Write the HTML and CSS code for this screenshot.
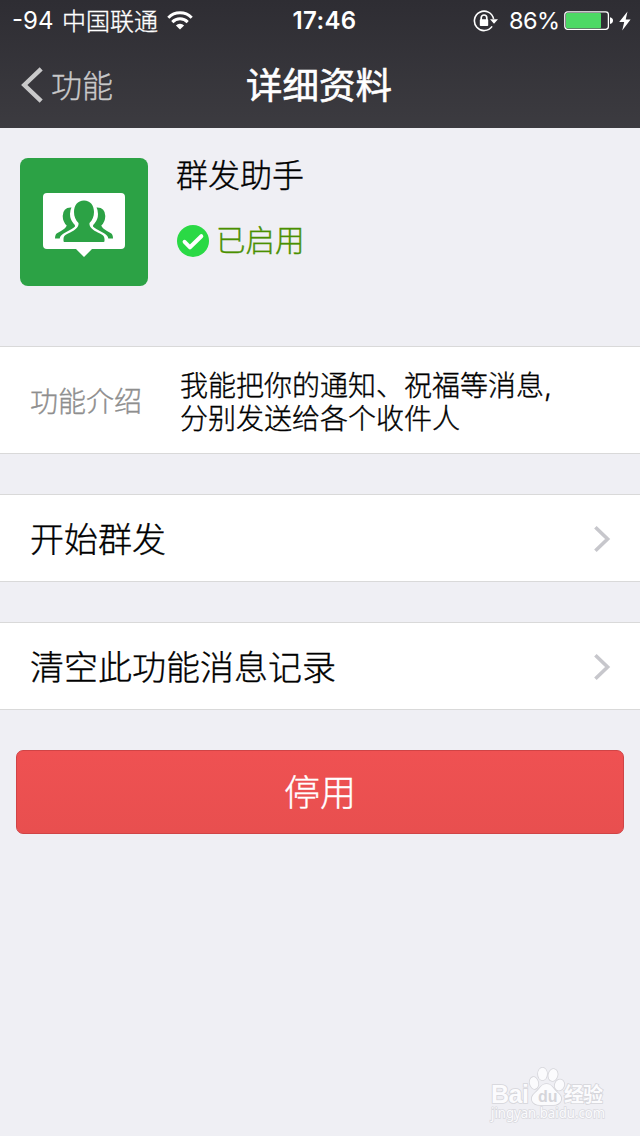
FILE: index.html
```html
<!DOCTYPE html>
<html lang="zh-CN">
<head>
<meta charset="utf-8">
<title>详细资料</title>
<link rel="stylesheet" href="styles.css">
</head>
<body>
<div class="screen">
  <header class="header">
    <div class="status">
      <div class="status-left">
        <span class="signal">-94</span>
        <span class="carrier">中国联通</span>
        <svg class="wifi" width="26" height="20" viewBox="0 0 26 20" fill="none" stroke="#fff" stroke-width="3">
          <path d="M1.300 6.700A16.500 16.500 0 0 1 24.700 6.700"/>
          <path d="M5.300 11.100A10.800 10.800 0 0 1 20.700 11.100"/>
          <path d="M13 18.500L8.900 14.400A5.800 5.800 0 0 1 17.100 14.400Z" fill="#fff" stroke="none"/>
        </svg>
      </div>
      <span class="time">17:46</span>
      <div class="status-right">
        <svg class="lock" width="26" height="24" viewBox="0 0 26 24">
          <path d="M19.1 17.4A9.7 9.7 0 1 1 20.6 9.8" fill="none" stroke="#fff" stroke-width="1.6"/>
          <path d="M17 10.2H25L21 14.7Z" fill="#fff"/>
          <path d="M8.2 11V8.8A2.8 2.8 0 0 1 13.8 8.8V11" fill="none" stroke="#fff" stroke-width="1.7"/>
          <rect x="6.8" y="10.2" width="8.4" height="6.8" rx="0.8" fill="#fff"/>
        </svg>
        <span class="percent">86%</span>
        <svg class="battery" width="50" height="20" viewBox="0 0 50 20">
          <rect x="0.8" y="0.8" width="43.6" height="17.6" rx="2.8" fill="none" stroke="#fff" stroke-width="1.3"/>
          <rect x="2" y="2" width="35" height="15.2" rx="1" fill="#4cd964"/>
          <path d="M46 6.3Q49 7 49 9.6Q49 12.3 46 13Z" fill="#fff"/>
        </svg>
        <svg class="bolt" width="12" height="20" viewBox="0 0 12 20"><path d="M8.5 0.5L0.2 11H5.2L3.2 19.5L11.6 8.5H6.7Z" fill="#fff"/></svg>
      </div>
    </div>
    <nav class="nav">
      <a class="back">
        <svg width="22" height="36" viewBox="0 0 22 36" fill="none" stroke="#c9c9ca" stroke-width="4.4"><path d="M20.2 1.9L3.3 18L20.2 34.1"/></svg>
        <span>功能</span>
      </a>
      <h1 class="title">详细资料</h1>
    </nav>
  </header>
  <main>
    <section class="profile">
      <svg class="avatar" width="128" height="128" viewBox="0 0 128 128">
        <rect width="128" height="128" rx="8" fill="#2ca245"/>
        <path d="M27 35H101Q105 35 105 39V87Q105 91 101 91H72L64 99L56 91H27Q23 91 23 87V39Q23 35 27 35Z" fill="#fff"/>
        <g id="side" fill="#2ca245">
          <path d="M51.500 49.500Q43 49 42.700 58Q42.800 64 46.700 67.500Q46 70 41 73L37 75.300Q35 76.500 35 80.500H39.700Q40 77.800 44 75.300Q53 70.500 55 68.500Q55.500 67 53.500 65.500Q50 61.500 50 56Q50 52 51.500 49.500Z"/>
        </g>
        <use href="#side" transform="translate(128 0) scale(-1 1)"/>
        <path d="M64 42.500C57.500 42.500 54 47.500 54 54C54 58.500 55.500 62 58.500 65C59 68.500 56 71.500 52 73.500C47 76 43.500 77 43.500 81V83Q43.500 84 44.500 84H83.500Q84.500 84 84.500 83V81C84.500 77 81 76 76 73.500C72 71.500 69 68.500 69.500 65C72.500 62 74 58.500 74 54C74 47.500 70.500 42.500 64 42.500Z" fill="#2ca245"/>
      </svg>
      <div class="info">
        <div class="name">群发助手</div>
        <div class="enabled">
          <svg width="32" height="32" viewBox="0 0 32 32"><circle cx="16" cy="16" r="16" fill="#2ad945"/><path d="M7.600 16.800L13 22.300L24.300 11.200" fill="none" stroke="#fff" stroke-width="4" stroke-linecap="round" stroke-linejoin="round"/></svg>
          <span>已启用</span>
        </div>
      </div>
    </section>
    <section class="intro">
      <span class="intro-label">功能介绍</span>
      <p class="intro-text">我能把你的通知、祝福等消息<span class="comma">,</span><br>分别发送给各个收件人</p>
    </section>
    <a class="row"><span>开始群发</span>
      <svg width="18" height="28" viewBox="0 0 18 28" fill="none" stroke="#c7c7cc" stroke-width="3.600"><path d="M2.400 2.300L14.600 14L2.400 25.700"/></svg></a>
    <a class="row"><span>清空此功能消息记录</span>
      <svg width="18" height="28" viewBox="0 0 18 28" fill="none" stroke="#c7c7cc" stroke-width="3.600"><path d="M2.400 2.300L14.600 14L2.400 25.700"/></svg></a>
    <button class="disable">停用</button>
  </main>
  <footer class="watermark">
    <svg width="124" height="68" viewBox="0 0 124 68">
      <g class="mark">
        <ellipse cx="47" cy="24" rx="4.200" ry="6" transform="rotate(-12 47 24)"/>
        <ellipse cx="55.500" cy="15" rx="4.500" ry="6.200"/>
        <ellipse cx="66" cy="16" rx="4.500" ry="6" transform="rotate(14 66 16)"/>
        <ellipse cx="72.500" cy="26" rx="4.600" ry="5.600" transform="rotate(20 72.500 26)"/>
        <path d="M59.500 25C65 25 66 30 71 34C77 39 74 46 66 46H53C45 46 42 39 48 34C53 30 54 25 59.500 25Z"/>
        <text class="brand" x="4" y="44" textLength="38">Bai</text>
        <text class="cjk" x="77" y="43" textLength="39">经验</text>
      </g>
      <text class="du" x="51" y="43">du</text>
      <text class="url" x="4" y="59" textLength="114" lengthAdjust="spacingAndGlyphs">jingyan.baidu.com</text>
    </svg>
  </footer>
</div>
</body>
</html>
```
FILE: styles.css
```css
* { box-sizing: border-box; }
body {
  margin: 0;
  background: #efeff4;
  font-family: Inter, "Noto Sans CJK SC", sans-serif;
  font-weight: 300;
  color: #000;
}
svg { display: block; flex: none; }
.screen { display: flex; flex-direction: column; width: 640px; height: 1136px; white-space: nowrap; }
.header { height: 128px; background: linear-gradient(#2e2d33, #3c3b40); color: #fff; }
.status {
  display: grid;
  grid-template-columns: 1fr 80px 1fr;
  align-items: center;
  height: 42px;
  font-size: 24px;
  font-weight: 400;
  line-height: 40px;
}
.status-left { display: flex; align-items: center; padding-left: 12px; }
.signal { width: 50px; font-size: 24px; }
.carrier { width: 105px; padding-top: 1px; font-weight: 300; }
.carrier, .back, .name, .enabled, .intro, .row, .disable { -webkit-text-stroke: 0.350px currentColor; }
.time { text-align: center; font-size: 24px; font-weight: 600; letter-spacing: 0.400px; margin-left: 9px; }
.status-right { display: flex; align-items: center; justify-content: flex-end; padding-right: 9px; }
.percent { width: 55px; margin-left: 10px; font-size: 23.500px; letter-spacing: -0.500px; }
.battery { margin-right: 5px; }
.nav {
  display: grid;
  grid-template-columns: 1fr auto 1fr;
  align-items: center;
  height: 86px;
}
.back { display: flex; align-items: center; gap: 8px; padding-left: 21px; font-size: 31px; line-height: 44px; color: #c9c9ca; }
.back span { padding-top: 1px; }
.title { margin: 0 2px 0 0; padding-top: 2px; font-size: 36.500px; line-height: 50px; font-weight: 400; -webkit-text-stroke: 0.600px currentColor; }
.profile { display: flex; gap: 29px; height: 218px; padding: 30px 20px; }
.name { margin-left: -1px; font-size: 32px; line-height: 36px; }
.enabled { display: flex; align-items: center; gap: 7px; margin-top: 28px; font-size: 29.500px; line-height: 36px; color: #4a9000; }
.enabled span { padding-bottom: 2px; }
.intro {
  display: flex;
  align-items: center;
  height: 108px;
  padding-left: 30px;
  background: #fff;
  border: solid #d9d9d9;
  border-width: 1px 0;
  font-size: 28px;
}
.intro-label { width: 150px; color: #8e8e8e; }
.intro-text { margin: 0; padding-top: 5px; line-height: 33px; }
.row {
  display: flex;
  align-items: center;
  justify-content: space-between;
  height: 88px;
  margin-top: 40px;
  padding: 0 29px 0 30px;
  background: #fff;
  border: solid #d9d9d9;
  border-width: 1px 0;
  font-size: 34px;
}
.row span { padding-bottom: 2px; }
.row svg { margin-top: 2px; }
.disable {
  display: block;
  width: 608px;
  height: 84px;
  margin: 40px 16px 0;
  padding: 2px 0 0;
  border: 1px solid #d04446;
  border-radius: 7px;
  background: linear-gradient(#ef5152, #e84f4f);
  color: #fff;
  font: 300 36px/80px Inter, "Noto Sans CJK SC", sans-serif;
}
.watermark { display: flex; justify-content: flex-end; margin-top: auto; padding: 0 29px 9px 0; }
.mark { fill: #fbfbfd; stroke: #d5d5da; stroke-width: 1.600; paint-order: stroke; }
.brand { font: 700 25px "Liberation Sans", sans-serif; }
.cjk { font: 700 20px "Noto Sans CJK SC", sans-serif; }
.du { font: 700 16px "Liberation Sans", sans-serif; fill: #d5d5da; }
.url { font: 14px "Noto Sans", sans-serif; fill: #fbfbfd; stroke: #d9d9de; stroke-width: 1.500; paint-order: stroke; }
```
